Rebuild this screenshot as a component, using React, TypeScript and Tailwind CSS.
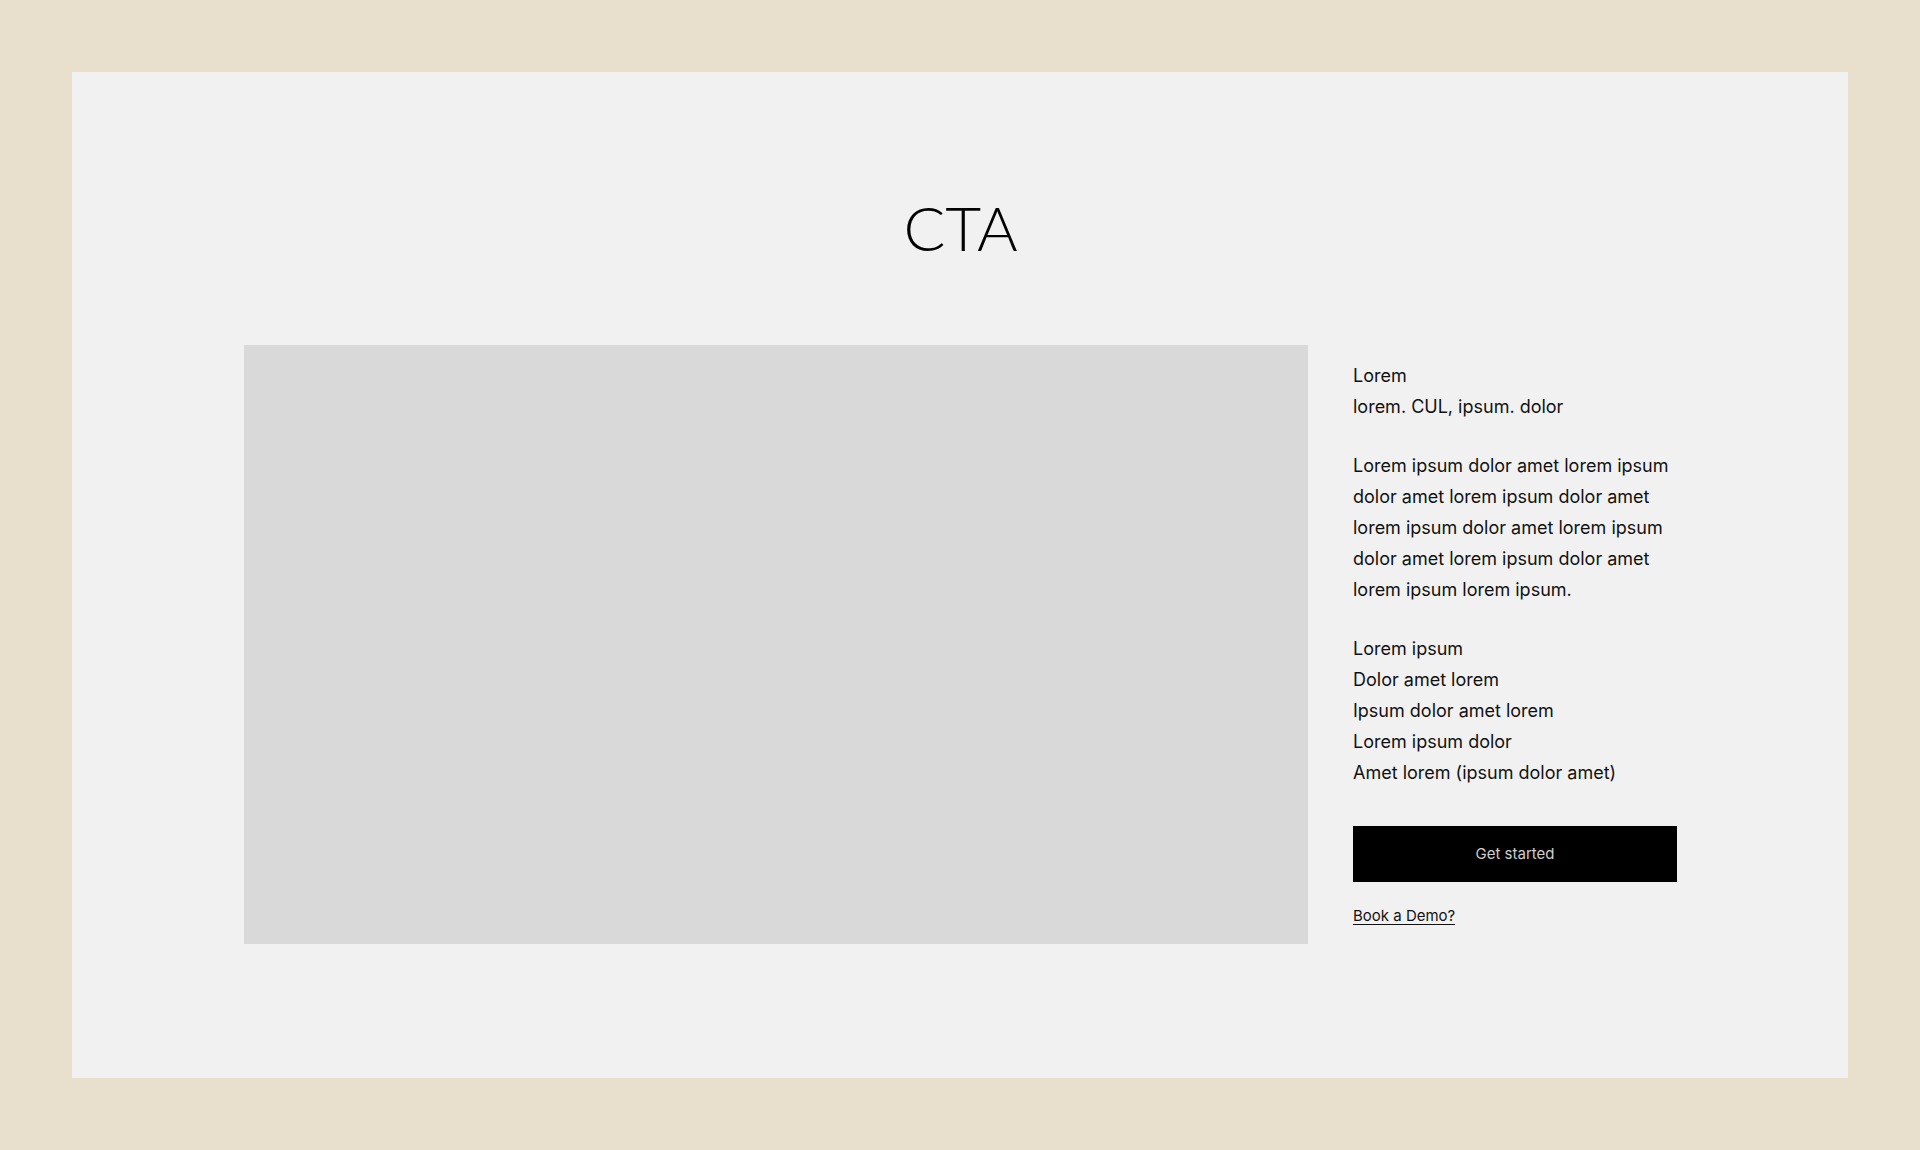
const features = [
  "Lorem ipsum",
  "Dolor amet lorem",
  "Ipsum dolor amet lorem",
  "Lorem ipsum dolor",
  "Amet lorem (ipsum dolor amet)",
];

function Details() {
  return (
    <div className="flex flex-col items-start pt-[15px]">
      <div className="flex flex-col gap-7 text-lg leading-[31px]">
        <p>
          Lorem
          <br />
          lorem. CUL, ipsum. dolor
        </p>
        <p>
          Lorem ipsum dolor amet lorem ipsum dolor amet lorem ipsum dolor amet
          lorem ipsum dolor amet lorem ipsum dolor amet lorem ipsum dolor amet
          lorem ipsum lorem ipsum.
        </p>
        <ul>
          {features.map((feature) => (
            <li key={feature}>{feature}</li>
          ))}
        </ul>
      </div>
      <button
        type="button"
        className="mt-[38px] h-14 w-full cursor-pointer bg-black text-[15px] text-[#cfcfcf]"
      >
        Get started
      </button>
      <a
        href="#demo"
        className="mt-[26px] border-b border-[#111111] text-[15px] leading-4"
      >
        Book a Demo?
      </a>
    </div>
  );
}

export default function App() {
  return (
    <main className="flex min-h-screen flex-col bg-[#e8dfcd] p-[72px] font-['Inter',sans-serif] text-[#111111]">
      <section className="flex-1 bg-[#f1f1f1] pt-[115px] pr-[171px] pb-[133px] pl-[172px]">
        <h1 className="text-center font-['Lato',sans-serif] text-[62px] leading-[80px] font-light text-black">
          CTA
        </h1>
        <div className="mt-[78px] grid grid-cols-[1fr_324px] items-start gap-[45px]">
          <div className="aspect-video bg-[#d9d9d9]" />
          <Details />
        </div>
      </section>
    </main>
  );
}
